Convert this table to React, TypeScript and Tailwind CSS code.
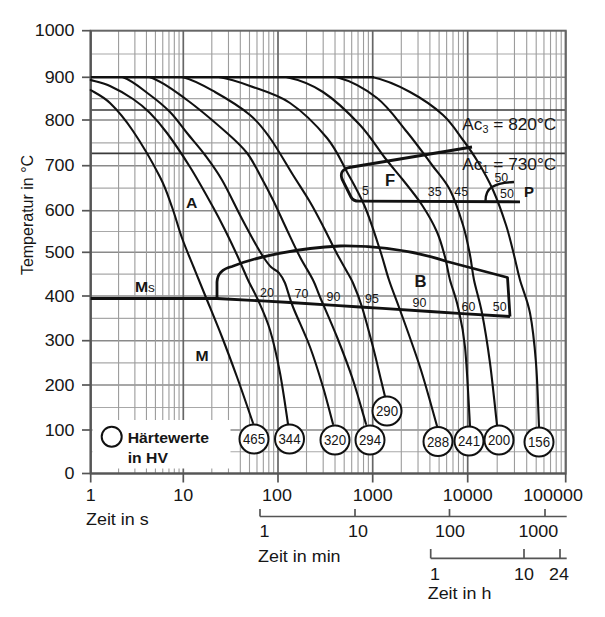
import React from "react";

// decade positions on the time axis (1 s ... 100000 s)
const DEC = [90.7, 183.3, 278, 372.7, 467.7, 565.7];
// y for 0,100,...,1000 °C
const TY = [473.5, 430, 385, 340.7, 296, 252.3, 210.7, 165.7, 120, 77.3, 30.7];

const yOf = (t: number) => {
  const i = Math.min(9, Math.floor(t / 100));
  const f = (t - i * 100) / 100;
  return TY[i] + (TY[i + 1] - TY[i]) * f;
};

const vLines: { x: number; major: boolean }[] = [];
for (let d = 0; d < 5; d++) {
  for (let k = 1; k <= 9; k++) {
    vLines.push({ x: DEC[d] + (DEC[d + 1] - DEC[d]) * Math.log10(k), major: k === 1 });
  }
}
vLines.push({ x: DEC[5], major: true });

type P = [number, number];

// catmull-rom through the points; `flat` makes the curve leave the first point horizontally
function smooth(pts: P[], flat = false) {
  const r = (n: number) => Math.round(n * 10) / 10;
  let d = `M${r(pts[0][0])} ${r(pts[0][1])}`;
  for (let i = 0; i < pts.length - 1; i++) {
    const p1 = pts[i];
    const p2 = pts[i + 1];
    const p0: P = pts[i - 1] ?? (flat ? [p1[0] - (p2[0] - p1[0]), p1[1]] : p1);
    const p3 = pts[i + 2] ?? p2;
    const c1x = p1[0] + (p2[0] - p0[0]) / 6;
    const c1y = p1[1] + (p2[1] - p0[1]) / 6;
    const c2x = p2[0] - (p3[0] - p1[0]) / 6;
    const c2y = p2[1] - (p3[1] - p1[1]) / 6;
    d += ` C${r(c1x)} ${r(c1y)} ${r(c2x)} ${r(c2y)} ${r(p2[0])} ${r(p2[1])}`;
  }
  return d;
}

const L = 77.3; // 900 °C line

const curves: { pts: P[]; flat: boolean }[] = [
  { flat: false, pts: [[90.7, 90], [110, 103], [133, 131], [160, 177], [172, 207], [182, 238], [194, 268], [207, 300], [222, 337], [237, 377], [253, 423]] },
  { flat: false, pts: [[90.7, 80], [110, 86], [133, 99], [150, 113], [167, 133], [190, 167], [213, 207], [226, 232], [237, 255], [248, 280], [258, 300], [270, 330], [280, 373], [288, 424]] },
  { flat: true, pts: [[123, L], [150, 95], [170, 112], [187, 133], [205, 155], [222, 180], [241, 217], [255, 243], [264, 258], [271, 267], [279, 273], [285, 283], [293, 307], [310, 347], [323, 387], [333, 424]] },
  { flat: true, pts: [[150, L], [187, 100], [227, 133], [247, 153], [261, 177], [273, 200], [287, 230], [300, 257], [313, 280], [320, 297], [337, 337], [353, 380], [366, 424]] },
  { flat: true, pts: [[183, L], [215, 92], [250, 115], [270, 138], [293, 175], [310, 202], [324, 228], [336, 252], [346, 270], [353, 283], [362, 307], [373, 347], [381, 380], [385, 396.5]] },
  { flat: true, pts: [[220, L], [250, 86], [290, 103], [327, 138], [347, 172], [365, 207], [380, 250], [389, 280], [400, 310], [420, 367], [437, 426]] },
  { flat: true, pts: [[287, L], [323, 92], [360, 125], [385, 158], [403, 180], [422, 205], [437, 232], [445, 257], [450, 280], [458, 307], [465, 347], [470, 426]] },
  { flat: true, pts: [[337, L], [377, 98], [407, 132], [432, 165], [450, 190], [463, 225], [470, 255], [474, 280], [482, 313], [490, 363], [497, 425]] },
  { flat: true, pts: [[373, L], [410, 92], [443, 115], [463, 140], [478, 162], [493, 190], [506, 225], [514, 255], [520, 280], [530, 313], [536, 363], [539, 427]] },
];

const hardness: { v: string; x: number; y: number }[] = [
  { v: "465", x: 254, y: 439 },
  { v: "344", x: 289.5, y: 439 },
  { v: "320", x: 335, y: 440 },
  { v: "294", x: 370, y: 440 },
  { v: "290", x: 387, y: 411 },
  { v: "288", x: 438, y: 441.5 },
  { v: "241", x: 469, y: 441 },
  { v: "200", x: 499, y: 440 },
  { v: "156", x: 539, y: 442 },
];

function Txt({
  x,
  y,
  a = "start",
  s = 16,
  w = 400,
  k = 1.12,
  children,
}: {
  x: number;
  y: number;
  a?: "start" | "middle" | "end";
  s?: number;
  w?: number;
  k?: number;
  children: React.ReactNode;
}) {
  return (
    <text
      transform={`translate(${x} ${y}) scale(${k} 1)`}
      textAnchor={a}
      fontSize={s}
      fontWeight={w}
      fill="#161616"
    >
      {children}
    </text>
  );
}

export default function App() {
  const yTicks = [0, 100, 200, 300, 400, 500, 600, 700, 800, 900, 1000];
  const halfLines = [50, 150, 250, 350, 450, 550, 650, 750, 850, 950];
  const xLabels = [
    { t: "1", x: DEC[0] },
    { t: "10", x: DEC[1] },
    { t: "100", x: DEC[2] - 1 },
    { t: "1000", x: DEC[3] },
    { t: "10000", x: DEC[4] },
    { t: "100000", x: 553 },
  ];
  const small = [
    { t: "20", x: 267, y: 296.7 },
    { t: "70", x: 301.5, y: 298 },
    { t: "90", x: 333.5, y: 301 },
    { t: "95", x: 372, y: 303 },
    { t: "90", x: 419.5, y: 307 },
    { t: "60", x: 468.5, y: 311 },
    { t: "50", x: 499.7, y: 311 },
    { t: "5", x: 365.5, y: 195 },
    { t: "35", x: 434.7, y: 196 },
    { t: "45", x: 461.2, y: 196 },
    { t: "50", x: 501.3, y: 181.7 },
    { t: "50", x: 507, y: 198.3 },
  ];

  const lower = smooth([[217, 298.5], [290, 302.5], [360, 307], [430, 311.5], [510, 316.5]]).replace(/^M[^C]+/, "");

  return (
    <div className="w-[605px] h-[617px] bg-white font-['Liberation_Sans',Arial,sans-serif]">
      <svg width={605} height={617} viewBox="0 0 605 617" className="block">
        {/* grid */}
        {halfLines.map((t) => (
          <line key={`h${t}`} x1={90.7} x2={565.7} y1={yOf(t)} y2={yOf(t)} stroke="#a8a8a8" strokeWidth={1.2} />
        ))}
        {yTicks.slice(1, 10).map((t) => (
          <line key={`H${t}`} x1={90.7} x2={565.7} y1={TY[t / 100]} y2={TY[t / 100]} stroke="#8a8a8a" strokeWidth={1.5} />
        ))}
        {vLines.map((l, i) => (
          <line
            key={`v${i}`}
            x1={l.x}
            x2={l.x}
            y1={30.7}
            y2={473.5}
            stroke={l.major ? "#666" : "#9c9c9c"}
            strokeWidth={l.major ? 1.7 : 1.1}
          />
        ))}

        {/* legend box covers the grid */}
        <rect x={92.5} y={420} width={138} height={48.5} fill="#fff" />

        {/* Ac3 / Ac1 lines */}
        <line x1={90.7} x2={565.7} y1={110} y2={110} stroke="#3a3a3a" strokeWidth={1.7} />
        <line x1={90.7} x2={565.7} y1={153.3} y2={153.3} stroke="#3a3a3a" strokeWidth={1.7} />

        {/* frame */}
        <rect x={90.7} y={30.7} width={475} height={442.8} fill="none" stroke="#666" strokeWidth={2} />
        <line x1={90.7} x2={565.7} y1={473.5} y2={473.5} stroke="#555" strokeWidth={2} />
        <line x1={90.7} x2={90.7} y1={30.7} y2={473.5} stroke="#555" strokeWidth={2} />

        {/* y ticks and labels */}
        {yTicks.map((t, i) => (
          <g key={`yt${t}`}>
            <line x1={82} x2={90.7} y1={TY[i]} y2={TY[i]} stroke="#555" strokeWidth={1.7} />
            <Txt x={74.5} y={TY[i] + 5.7} a="end">
              {t}
            </Txt>
          </g>
        ))}

        {/* x ticks and labels */}
        {DEC.map((x, i) => (
          <line key={`xt${i}`} x1={x} x2={x} y1={473.5} y2={482.5} stroke="#555" strokeWidth={1.7} />
        ))}
        {xLabels.map((l) => (
          <Txt key={`xl${l.t}`} x={l.x} y={500.7} a="middle">
            {l.t}
          </Txt>
        ))}
        <Txt x={86} y={525}>Zeit in s</Txt>

        {/* minutes axis */}
        <line x1={260} x2={566.7} y1={516.5} y2={516.5} stroke="#555" strokeWidth={1.7} />
        {[260, 355, 449.5, 545].map((x) => (
          <line key={`mt${x}`} x1={x} x2={x} y1={509} y2={516.5} stroke="#555" strokeWidth={1.7} />
        ))}
        <Txt x={259.5} y={537.3}>1</Txt>
        <Txt x={358} y={537.3} a="middle">10</Txt>
        <Txt x={450} y={537.3} a="middle">100</Txt>
        <Txt x={538.3} y={537.3} a="middle">1000</Txt>
        <Txt x={258} y={561.7}>Zeit in min</Txt>

        {/* hours axis */}
        <line x1={430.7} x2={566.7} y1={558.3} y2={558.3} stroke="#555" strokeWidth={1.7} />
        {[430.7, 524, 560].map((x) => (
          <line key={`ht${x}`} x1={x} x2={x} y1={549} y2={558.3} stroke="#555" strokeWidth={1.7} />
        ))}
        <Txt x={430} y={580}>1</Txt>
        <Txt x={524} y={580} a="middle">10</Txt>
        <Txt x={559} y={580} a="middle">24</Txt>
        <Txt x={427.7} y={599.3}>Zeit in h</Txt>

        {/* y axis title */}
        <text transform="translate(33 215) rotate(-90)" textAnchor="middle" fontSize={16} fill="#161616">
          Temperatur in °C
        </text>

        {/* austenitizing line at 900 °C */}
        <line x1={90.7} x2={374} y1={L} y2={L} stroke="#111" strokeWidth={2.4} />

        {/* cooling curves */}
        {curves.map((c, i) => (
          <path key={`c${i}`} d={smooth(c.pts, c.flat)} fill="none" stroke="#111" strokeWidth={2.1} strokeLinecap="round" />
        ))}

        {/* Ms line and bainite lower boundary */}
        <path d={`M90.7 298.5 L217 298.5 ${lower}`} fill="none" stroke="#111" strokeWidth={2.8} />
        {/* bainite region */}
        <path
          d="M217 298.5 L217 282 Q217.5 270 232 266.5 C258 256 300 248 340 246 C378 245.5 415 251 447 261.5 L507.5 277.5 L510 316.5"
          fill="none"
          stroke="#111"
          strokeWidth={2.8}
          strokeLinejoin="round"
        />
        {/* ferrite region */}
        <path
          d="M472 147 L349 167.5 Q339 170 342 179 L351 197 Q353 201.2 359 201.2 L520 201.8"
          fill="none"
          stroke="#111"
          strokeWidth={2.8}
          strokeLinejoin="round"
        />
        {/* pearlite start */}
        <path d="M485.5 201 Q485.5 191 492 187 Q499 182.5 514 182" fill="none" stroke="#111" strokeWidth={2.4} />

        {/* region letters */}
        <Txt x={191.7} y={208} a="middle" s={15} w={700} k={1.05}>A</Txt>
        <Txt x={202} y={361} a="middle" s={15} w={700} k={1.05}>M</Txt>
        <Txt x={135} y={291.7} s={15} w={700} k={1.05}>
          M<tspan fontSize={13} fontWeight={400}>s</tspan>
        </Txt>
        <Txt x={420.5} y={287.3} a="middle" s={17} w={700} k={0.98}>B</Txt>
        <Txt x={390} y={186} a="middle" s={17} w={700} k={0.98}>F</Txt>
        <Txt x={529} y={197.3} a="middle" s={15} w={700} k={1}>P</Txt>

        {/* small percentage labels */}
        {small.map((l, i) => (
          <Txt key={`s${i}`} x={l.x} y={l.y} a="middle" s={13.5} k={0.92}>
            {l.t}
          </Txt>
        ))}

        {/* Ac labels */}
        <Txt x={462.3} y={130} s={16} k={1.08}>
          Ac<tspan fontSize={10} dy={3}>3</tspan>
          <tspan dy={-3}> = 820°C</tspan>
        </Txt>
        <Txt x={462.3} y={170} s={16} k={1.08}>
          Ac<tspan fontSize={10} dy={3}>1</tspan>
          <tspan dy={-3}> = 730°C</tspan>
        </Txt>

        {/* hardness circles */}
        {hardness.map((h) => (
          <g key={`hv${h.v}`}>
            <circle cx={h.x} cy={h.y} r={14.5} fill="#fff" stroke="#111" strokeWidth={2} />
            <Txt x={h.x} y={h.y + 5} a="middle" s={14} k={0.95}>
              {h.v}
            </Txt>
          </g>
        ))}

        {/* legend */}
        <circle cx={111.7} cy={436.7} r={10} fill="#fff" stroke="#111" strokeWidth={2} />
        <Txt x={127.7} y={443.3} s={15} w={700} k={1.05}>Härtewerte</Txt>
        <Txt x={127.7} y={463.3} s={15} w={700} k={1.05}>in HV</Txt>
      </svg>
    </div>
  );
}
